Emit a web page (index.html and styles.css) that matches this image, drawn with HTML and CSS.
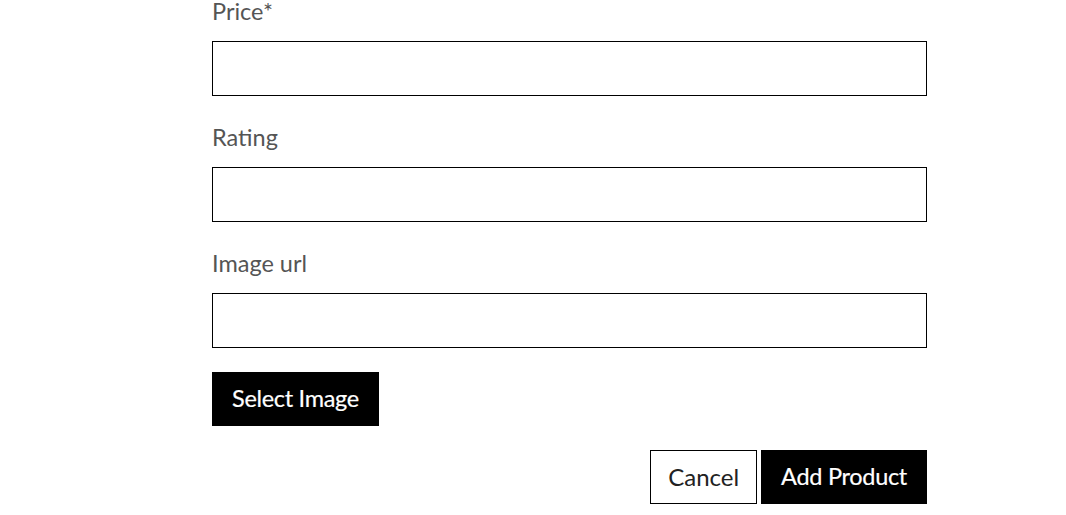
FILE: index.html
```html
<!DOCTYPE html>
<html lang="en">
<head>
<meta charset="utf-8">
<title>Add Product</title>
<link rel="stylesheet" href="styles.css">
</head>
<body>
<form class="product-form">
  <div class="field">
    <label class="field-label" for="price">Price*</label>
    <input class="field-input" id="price" type="text">
  </div>
  <div class="field">
    <label class="field-label" for="rating">Rating</label>
    <input class="field-input" id="rating" type="text">
  </div>
  <div class="field field-last">
    <label class="field-label" for="image">Image url</label>
    <input class="field-input" id="image" type="text">
  </div>
  <div class="select-row">
    <button type="button" class="btn btn-dark">Select Image</button>
  </div>
  <div class="actions">
    <button type="button" class="btn btn-light">Cancel</button>
    <button type="submit" class="btn btn-dark">Add Product</button>
  </div>
</form>
</body>
</html>
```

FILE: styles.css
```css
html, body {
  margin: 0;
  padding: 0;
  background: #fff;
}

body {
  font-family: Lato, "Open Sans", sans-serif;
}

.product-form {
  width: 715px;
  margin: 0 0 0 212px;
  display: flex;
  flex-direction: column;
}

.field {
  display: flex;
  flex-direction: column;
  margin-bottom: 30px;
}

.field.field-last {
  margin-bottom: 24px;
}

.field-label {
  font-size: 23.5px;
  line-height: 23px;
  color: #555;
  margin-bottom: 18px;
}

.field-input {
  box-sizing: border-box;
  width: 100%;
  height: 55px;
  margin: 0;
  border: 1px solid #000;
  border-radius: 0;
  background: #fff;
  font-family: inherit;
  font-size: 20px;
  padding: 0 12px;
}

.select-row {
  display: flex;
  margin-bottom: 24px;
}

.actions {
  display: flex;
  justify-content: flex-end;
  gap: 4px;
}

.btn {
  box-sizing: border-box;
  height: 54px;
  margin: 0;
  padding: 0 19px 2px;
  font-family: inherit;
  font-size: 23.5px;
  font-weight: 400;
  border-radius: 0;
  cursor: pointer;
}

.btn-dark {
  background: #000;
  color: #fff;
  border: 1px solid #000;
  letter-spacing: -0.3px;
  -webkit-text-stroke: 0.2px #fff;
}

.btn-light {
  padding: 0 17px 2px;
  font-size: 24px;
  background: #fff;
  color: #222;
  border: 1px solid #000;
}
```
